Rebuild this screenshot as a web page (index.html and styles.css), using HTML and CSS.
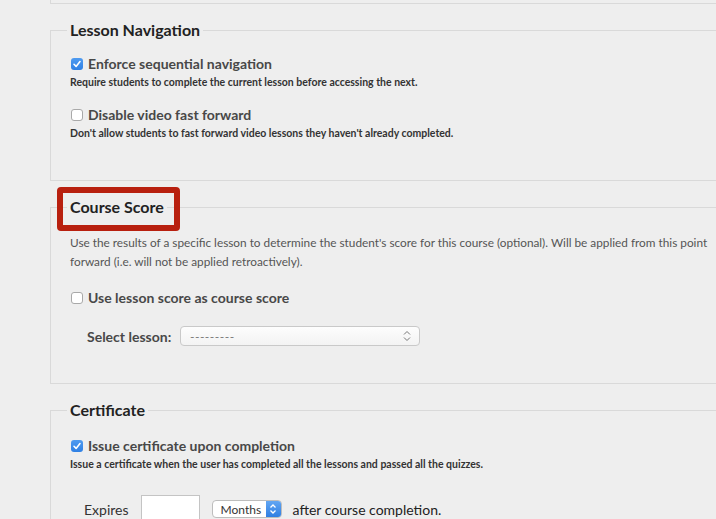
FILE: index.html
```html
<!DOCTYPE html>
<html lang="en">
<head>
  <meta charset="UTF-8">
  <meta name="viewport" content="width=device-width, initial-scale=1.0">
  <title>Course Settings</title>
  <link rel="stylesheet" href="styles.css">
</head>
<body>
  <div class="page">
    <div class="top-box"></div>

    <fieldset class="panel">
      <legend>Lesson Navigation</legend>
      <div class="option">
        <label class="check-row">
          <span class="box checked"><svg width="12" height="12" viewBox="0 0 12 12"><path d="M3 6.3 L5.1 8.4 L9 3.6" fill="none" stroke="#fff" stroke-width="1.6" stroke-linecap="round" stroke-linejoin="round"/></svg></span>
          Enforce sequential navigation
        </label>
        <div class="help">Require students to complete the current lesson before accessing the next.</div>
      </div>
      <div class="option">
        <label class="check-row">
          <span class="box"></span>
          Disable video fast forward
        </label>
        <div class="help">Don't allow students to fast forward video lessons they haven't already completed.</div>
      </div>
    </fieldset>

    <fieldset class="panel score">
      <legend>Course Score<span class="highlight"></span></legend>
      <p class="intro">Use the results of a specific lesson to determine the student's score for this course (optional). Will be applied from this point forward (i.e. will not be applied retroactively).</p>
      <div class="option">
        <label class="check-row">
          <span class="box"></span>
          Use lesson score as course score
        </label>
      </div>
      <div class="select-row">
        <span class="select-label">Select lesson:</span>
        <div class="select wide">
          <span>---------</span>
          <svg width="8" height="12" viewBox="0 0 8 12"><path d="M1 4.5 L4 1.5 L7 4.5 M1 7.5 L4 10.5 L7 7.5" fill="none" stroke="#777" stroke-width="1"/></svg>
        </div>
      </div>
    </fieldset>

    <fieldset class="panel cert">
      <legend>Certificate</legend>
      <div class="option">
        <label class="check-row">
          <span class="box checked"><svg width="12" height="12" viewBox="0 0 12 12"><path d="M3 6.3 L5.1 8.4 L9 3.6" fill="none" stroke="#fff" stroke-width="1.6" stroke-linecap="round" stroke-linejoin="round"/></svg></span>
          Issue certificate upon completion
        </label>
        <div class="help">Issue a certificate when the user has completed all the lessons and passed all the quizzes.</div>
      </div>
      <div class="expires-row">
        <span>Expires</span>
        <span class="num-input"></span>
        <div class="select small">
          <span>Months</span>
          <span class="select-arrow"><svg width="8" height="12" viewBox="0 0 8 12"><path d="M1.5 4.5 L4 2 L6.5 4.5 M1.5 7.5 L4 10 L6.5 7.5" fill="none" stroke="#fff" stroke-width="1.3"/></svg></span>
        </div>
        <span class="after">after course completion.</span>
      </div>
    </fieldset>
  </div>
</body>
</html>
```

FILE: styles.css
```css
body {
  margin: 0;
  background: #eeeeee;
  font-family: Lato, "Open Sans", sans-serif;
  overflow: hidden;
}
.page {
  padding-left: 50px;
  width: 720px;
}
.top-box {
  height: 3px;
  border-left: 1px solid #d9d9d9;
  border-bottom: 1px solid #d9d9d9;
  margin-bottom: 16px;
}
.panel {
  margin: 0 0 16px;
  padding: 15px 16px 40px 19px;
  border: 1px solid #d9d9d9;
  min-width: 0;
}
.panel legend {
  position: relative;
  margin-left: -3px;
  padding: 0 3px;
  font-size: 16px;
  line-height: 20px;
  font-weight: 700;
  color: #222;
}
.highlight {
  position: absolute;
  left: -10px;
  top: -10px;
  width: 111px;
  height: 32px;
  border: 6px solid #b8200f;
  border-radius: 4px;
}
.option + .option {
  margin-top: 17px;
}
.check-row {
  display: flex;
  align-items: center;
  gap: 5px;
  font-size: 14px;
  line-height: 18px;
  font-weight: 700;
  color: #484848;
}
.box {
  width: 12px;
  height: 12px;
  margin-left: 1px;
  box-sizing: border-box;
  border: 1px solid #a9a9a9;
  border-radius: 3px;
  background: #fff;
  display: flex;
}
.box.checked {
  border: none;
  background: linear-gradient(#4f9bf0, #2f80e4);
}
.help {
  margin-top: 2px;
  font-size: 10.5px;
  line-height: 14px;
  font-weight: 700;
  color: #333;
}
.intro {
  max-width: 642px;
  margin: 1px 0 18px;
  font-size: 11.8px;
  line-height: 19px;
  color: #555;
}
.score {
  padding-bottom: 37px;
}
.cert {
  padding-top: 17px;
}
.select-row {
  display: flex;
  align-items: center;
  margin-top: 19px;
  padding-left: 17px;
}
.select-label {
  width: 93px;
  font-size: 14px;
  font-weight: 700;
  color: #484848;
}
.select {
  display: flex;
  align-items: center;
  justify-content: space-between;
  box-sizing: border-box;
  border: 1px solid #c9c9c9;
  border-radius: 4px;
  background: linear-gradient(#fdfdfd, #f3f3f3);
  font-size: 12px;
}
.select.wide {
  width: 240px;
  height: 20px;
  padding: 0 8px 0 9px;
  color: #777;
  letter-spacing: 0.5px;
}
.expires-row {
  display: flex;
  align-items: center;
  margin-top: 24px;
  padding-left: 14px;
  font-size: 14px;
  color: #333;
}
.num-input {
  width: 59px;
  height: 28px;
  margin-left: 12px;
  box-sizing: border-box;
  border: 1px solid #c4c4c4;
  background: #fff;
}
.select.small {
  width: 70px;
  height: 18px;
  margin-left: 12px;
  padding-left: 8px;
  border-color: #bdbdbd;
  background: #fff;
  color: #333;
  overflow: hidden;
}
.select-arrow {
  width: 15px;
  height: 100%;
  display: flex;
  align-items: center;
  justify-content: center;
  background: linear-gradient(#62a6f3, #2f7fe2);
}
.after {
  margin-left: 11px;
  color: #222;
}
```
